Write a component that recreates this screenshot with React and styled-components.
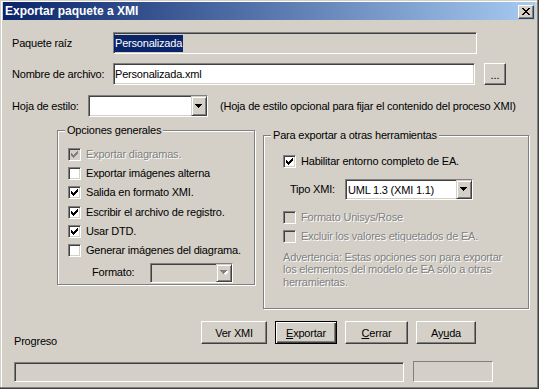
import styled, { createGlobalStyle, css } from "styled-components";

const face = "#d4d0c8";

const GlobalStyle = createGlobalStyle`
  html, body {
    margin: 0;
    padding: 0;
    background: ${face};
  }
  body {
    font-family: "Liberation Sans", Arial, sans-serif;
    font-size: 11px;
    letter-spacing: -0.2px;
    color: #000;
  }
`;

const sunken = css`
  box-sizing: border-box;
  border: 1px solid;
  border-color: #808080 #fff #fff #808080;
  box-shadow: inset 1px 1px #404040, inset -1px -1px ${face};
`;

const raised = css`
  box-sizing: border-box;
  border: 1px solid;
  border-color: #fff #404040 #404040 #fff;
  box-shadow: inset -1px -1px #808080;
  background: ${face};
`;

const disabledText = css`
  color: #808080;
  text-shadow: 1px 1px 0 #fff;
`;

const Window = styled.div`
  box-sizing: border-box;
  width: 539px;
  height: 389px;
  padding: 2px 4px 3px 3px;
  background: ${face};
  box-shadow: inset -1px -1px #404040, inset -2px -2px #808080,
    inset 1px 1px ${face}, inset 2px 2px #fff;
  display: flex;
  flex-direction: column;
`;

const TitleBar = styled.div`
  height: 18px;
  flex-shrink: 0;
  display: flex;
  align-items: center;
  justify-content: space-between;
  padding: 0 1px 0 2px;
  background: linear-gradient(to right, #0a246a, #a6caf0);
  color: #fff;
  font-weight: bold;
  font-size: 12px;
  letter-spacing: 0;
`;

const CloseButton = styled.span`
  ${raised};
  width: 16px;
  height: 14px;
  display: flex;
  align-items: center;
  justify-content: center;
  margin-top: 1px;
`;

const Body = styled.div`
  flex: 1;
  padding: 12px 0 0 9px;
  display: flex;
  flex-direction: column;
`;

const FieldRow = styled.div`
  display: flex;
  align-items: center;
  height: 22px;
  margin-top: ${(p) => p.$top || 0}px;
`;

const Label = styled.span`
  width: ${(p) => p.$w}px;
  flex-shrink: 0;
  margin-left: ${(p) => p.$left || 0}px;
  line-height: 13px;
  ${(p) => p.$disabled && disabledText};
`;

const TextBox = styled.div`
  ${sunken};
  width: ${(p) => p.$w}px;
  height: 22px;
  padding: 0 0 0 1px;
  display: flex;
  align-items: center;
  background: ${(p) => (p.$readOnly ? face : "#fff")};
  white-space: nowrap;
`;

const Selected = styled.span`
  display: inline-block;
  height: 17px;
  line-height: 17px;
  margin-left: -1px;
  padding: 0 1px;
  background: #0a246a;
  color: #fff;
`;

const SmallButton = styled.button`
  ${raised};
  width: 22px;
  height: 22px;
  margin-left: 9px;
  padding: 0 0 3px;
  font: 11px "Liberation Sans", Arial, sans-serif;
  display: flex;
  align-items: flex-end;
  justify-content: center;
`;

const ComboBox = styled.div`
  ${sunken};
  width: ${(p) => p.$w}px;
  height: ${(p) => p.$h}px;
  display: flex;
  align-items: stretch;
  justify-content: space-between;
  background: ${(p) => (p.$disabled ? face : "#fff")};
`;

const ComboText = styled.span`
  padding-left: 2px;
  display: flex;
  align-items: center;
  white-space: nowrap;
`;

const DropButton = styled.span`
  box-sizing: border-box;
  width: 16px;
  flex-shrink: 0;
  background: ${face};
  border: 1px solid;
  border-color: ${face} #404040 #404040 ${face};
  box-shadow: inset 1px 1px #fff, inset -1px -1px #808080;
  display: flex;
  align-items: center;
  justify-content: center;
`;

const Hint = styled.span`
  margin-left: 12px;
  white-space: nowrap;
`;

const GroupRow = styled.div`
  display: flex;
  align-items: flex-start;
  gap: 8px;
  margin-top: 13px;
  padding-left: 45px;
`;

const Group = styled.div`
  position: relative;
  box-sizing: border-box;
  width: ${(p) => p.$w}px;
  height: ${(p) => p.$h}px;
  margin-top: ${(p) => p.$top || 0}px;
  padding: ${(p) => p.$pad};
  border: 1px solid #808080;
  box-shadow: inset 1px 1px #fff, 1px 1px 0 #fff;
  display: flex;
  flex-direction: column;
`;

const Caption = styled.span`
  position: absolute;
  top: -7px;
  left: 7px;
  padding: 0 2px;
  line-height: 13px;
  background: ${face};
  white-space: nowrap;
`;

const CheckRow = styled.div`
  display: flex;
  align-items: center;
  gap: 5px;
  height: 19.2px;
  margin-top: ${(p) => p.$top || 0}px;
  white-space: nowrap;
`;

const CheckText = styled.span`
  line-height: 13px;
  ${(p) => p.$disabled && disabledText};
`;

const Box = styled.span`
  ${sunken};
  width: 13px;
  height: 13px;
  flex-shrink: 0;
  background: ${(p) => (p.$disabled ? face : "#fff")};
  display: block;
  position: relative;
`;

const ComboRow = styled.div`
  display: flex;
  align-items: center;
  height: 21px;
  margin-top: ${(p) => p.$top || 0}px;
`;

const Warning = styled.p`
  margin: 4px 0 0;
  line-height: 12.5px;
  ${disabledText};
`;

const BottomRow = styled.div`
  display: flex;
  align-items: flex-start;
  margin-top: 12px;
`;

const ProgressLabel = styled.span`
  width: 187px;
  margin: 14px 0 0 2px;
  line-height: 13px;
`;

const Buttons = styled.div`
  display: flex;
  gap: 8px;
`;

const Button = styled.button`
  ${raised};
  width: ${(p) => p.$w}px;
  height: 23px;
  padding: 0;
  font: 11px "Liberation Sans", Arial, sans-serif;
  letter-spacing: -0.2px;
  color: #000;
  ${(p) =>
    p.$default &&
    css`
      border: 1px solid #000;
      box-shadow: inset 1px 1px #fff, inset -1px -1px #404040,
        inset -2px -2px #808080;
    `}
`;

const ProgressRow = styled.div`
  display: flex;
  gap: 9px;
  margin-top: 14px;
  padding-left: 2px;
`;

const ProgressBar = styled.div`
  ${sunken};
  width: 390px;
  height: 20px;
`;

const StatusBox = styled.div`
  box-sizing: border-box;
  width: 80px;
  height: 21px;
  margin-top: -1px;
  border: 1px solid;
  border-color: #808080 #fff #fff #808080;
`;

function CloseIcon() {
  const rows = [
    [0, 1, 6, 7],
    [1, 2, 5, 6],
    [2, 3, 4, 5],
    [3, 4],
    [2, 3, 4, 5],
    [1, 2, 5, 6],
    [0, 1, 6, 7],
  ];
  return (
    <svg width="8" height="7" viewBox="0 0 8 7" shapeRendering="crispEdges">
      {rows.map((cols, y) =>
        cols.map((x) => <rect key={`${x}-${y}`} x={x} y={y} width="1" height="1" fill="#000" />)
      )}
    </svg>
  );
}

function Arrow({ disabled }) {
  return (
    <svg width="8" height="5" viewBox="0 0 8 5" shapeRendering="crispEdges">
      {disabled && <path d="M2 1h7L5 5z" fill="#fff" />}
      <path d="M0 0h7L3.5 4z" fill={disabled ? "#808080" : "#000"} />
    </svg>
  );
}

function CheckMark({ disabled }) {
  const cols = [5, 6, 7, 6, 5, 4, 3];
  return (
    <svg
      width="13"
      height="13"
      viewBox="0 0 13 13"
      shapeRendering="crispEdges"
      style={{ position: "absolute", left: -1, top: -1 }}
    >
      {cols.map((y, i) => (
        <rect key={i} x={3 + i} y={y} width="1" height="3" fill={disabled ? "#808080" : "#000"} />
      ))}
    </svg>
  );
}

function Check({ checked, disabled, top, children }) {
  return (
    <CheckRow $top={top}>
      <Box $disabled={disabled}>{checked && <CheckMark disabled={disabled} />}</Box>
      <CheckText $disabled={disabled}>{children}</CheckText>
    </CheckRow>
  );
}

function Combo({ w, h, value, disabled }) {
  return (
    <ComboBox $w={w} $h={h} $disabled={disabled}>
      <ComboText>{value}</ComboText>
      <DropButton>
        <Arrow disabled={disabled} />
      </DropButton>
    </ComboBox>
  );
}

export default function App() {
  return (
    <>
      <GlobalStyle />
      <Window>
        <TitleBar>
          <span>Exportar paquete a XMI</span>
          <CloseButton>
            <CloseIcon />
          </CloseButton>
        </TitleBar>
        <Body>
          <FieldRow>
            <Label $w={101}>Paquete raíz</Label>
            <TextBox $w={364} $readOnly>
              <Selected>Personalizada</Selected>
            </TextBox>
          </FieldRow>
          <FieldRow $top={9}>
            <Label $w={101}>Nombre de archivo:</Label>
            <TextBox $w={362}>Personalizada.xml</TextBox>
            <SmallButton>...</SmallButton>
          </FieldRow>
          <FieldRow $top={10}>
            <Label $w={76}>Hoja de estilo:</Label>
            <Combo w={120} h={22} value="" />
            <Hint>(Hoja de estilo opcional para fijar el contenido del proceso XMI)</Hint>
          </FieldRow>

          <GroupRow>
            <Group $w={198} $h={155} $pad="14px 0 0 10px">
              <Caption>Opciones generales</Caption>
              <Check checked disabled>Exportar diagramas.</Check>
              <Check>Exportar imágenes alterna</Check>
              <Check checked>Salida en formato XMI.</Check>
              <Check checked>Escribir el archivo de registro.</Check>
              <Check checked>Usar DTD.</Check>
              <Check>Generar imágenes del diagrama.</Check>
              <ComboRow $top={2}>
                <Label $w={58} $left={24}>Formato:</Label>
                <Combo w={83} h={20} value="" disabled />
              </ComboRow>
            </Group>
            <Group $w={266} $h={174} $top={5} $pad="16px 0 0 19px">
              <Caption>Para exportar a otras herramientas</Caption>
              <Check checked>Habilitar entorno completo de EA.</Check>
              <ComboRow $top={8}>
                <Label $w={55} $left={7}>Tipo XMI:</Label>
                <Combo w={128} h={21} value="UML 1.3 (XMI 1.1)" />
              </ComboRow>
              <Check disabled top={8}>Formato Unisys/Rose</Check>
              <Check disabled>Excluir los valores etiquetados de EA.</Check>
              <Warning>
                Advertencia: Estas opciones son para exportar
                <br />
                los elementos del modelo de EA sólo a otras
                <br />
                herramientas.
              </Warning>
            </Group>
          </GroupRow>

          <BottomRow>
            <ProgressLabel>Progreso</ProgressLabel>
            <Buttons>
              <Button $w={66}>Ver XMI</Button>
              <Button $w={62} $default>
                <u>E</u>xportar
              </Button>
              <Button $w={63}>
                <u>C</u>errar
              </Button>
              <Button $w={60}>
                Ay<u>u</u>da
              </Button>
            </Buttons>
          </BottomRow>

          <ProgressRow>
            <ProgressBar />
            <StatusBox />
          </ProgressRow>
        </Body>
      </Window>
    </>
  );
}
